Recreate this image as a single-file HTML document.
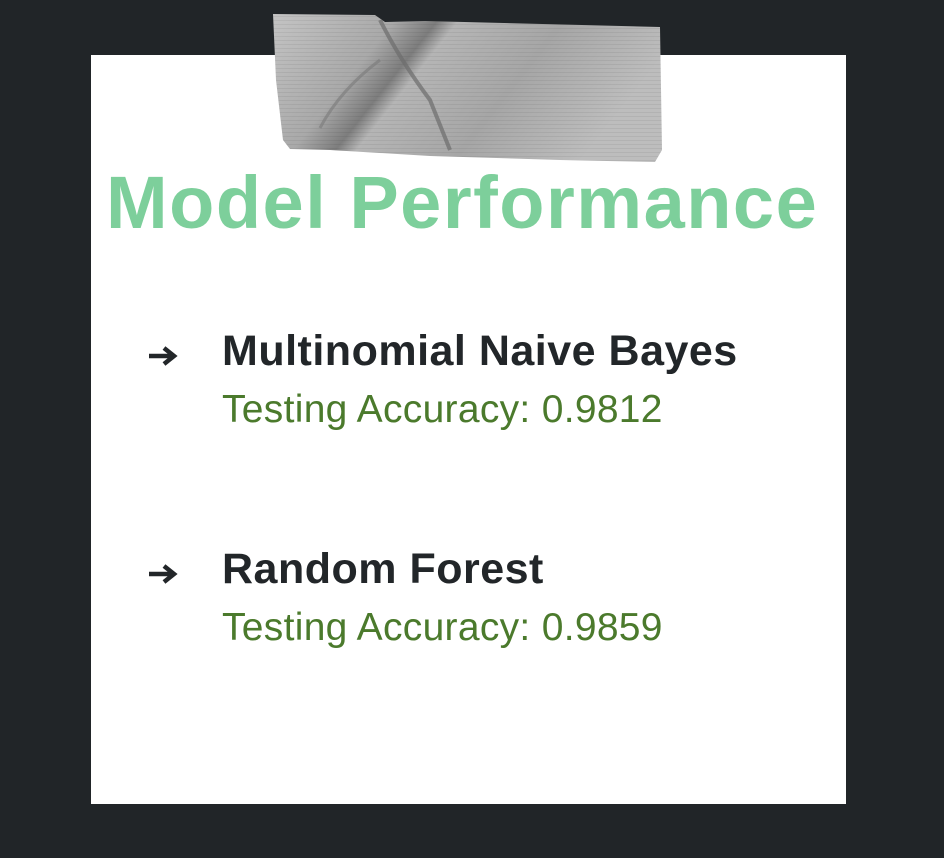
<!DOCTYPE html>
<html><head><style>
html,body{margin:0;padding:0;width:944px;height:858px;background:#212528;overflow:hidden;font-family:"Liberation Sans",sans-serif;}
.card{position:absolute;left:91px;top:55px;width:755px;height:749px;background:#fff;}
.t{position:absolute;white-space:nowrap;line-height:1;}
.title{left:106px;top:166px;font-size:74px;font-weight:bold;color:#7dcf9b;letter-spacing:1.5px;}
.h{font-size:43px;font-weight:bold;color:#222629;left:222px;letter-spacing:0.5px;}
.a{font-size:39px;color:#4b7a2c;left:222px;letter-spacing:0.3px;}
.arr{position:absolute;left:147px;}
</style></head><body>
<div class="card"></div>
<svg style="position:absolute;left:0;top:0" width="944" height="200">
<defs>
<linearGradient id="g" x1="0" y1="0" x2="1" y2="0.3">
<stop offset="0" stop-color="#c4c4c4"/><stop offset="0.3" stop-color="#a9a9a9"/><stop offset="0.4" stop-color="#7d7d7d"/><stop offset="0.45" stop-color="#b5b5b5"/><stop offset="0.7" stop-color="#a6a6a6"/><stop offset="1" stop-color="#bdbdbd"/>
</linearGradient>
<pattern id="p" width="6" height="4" patternUnits="userSpaceOnUse"><rect width="6" height="1" fill="#000" opacity="0.06"/></pattern>
</defs>
<polygon points="273,14 375,15 385,22 425,21 660,27 662,150 655,162 560,160 430,156 330,150 290,149 283,140 276,80" fill="url(#g)"/>
<polygon points="273,14 375,15 385,22 425,21 660,27 662,150 655,162 560,160 430,156 330,150 290,149 283,140 276,80" fill="url(#p)"/>
<path d="M380,20 Q400,60 430,100 L450,150" stroke="#6c6c6c" stroke-width="4" fill="none" opacity="0.7"/>
<path d="M380,60 Q340,90 320,128" stroke="#7a7a7a" stroke-width="3" fill="none" opacity="0.6"/>
</svg>
<div class="t title">Model Performance</div>
<svg class="arr" style="top:345px" width="32" height="22" viewBox="0 0 32 22"><path d="M2 11H26M17 3L27 11L17 19" stroke="#222629" stroke-width="4.5" fill="none"/></svg>
<div class="t h" style="top:330px">Multinomial Naive Bayes</div>
<div class="t a" style="top:390px">Testing Accuracy: 0.9812</div>
<svg class="arr" style="top:563px" width="32" height="22" viewBox="0 0 32 22"><path d="M2 11H26M17 3L27 11L17 19" stroke="#222629" stroke-width="4.5" fill="none"/></svg>
<div class="t h" style="top:548px">Random Forest</div>
<div class="t a" style="top:608px">Testing Accuracy: 0.9859</div>
</body></html>
